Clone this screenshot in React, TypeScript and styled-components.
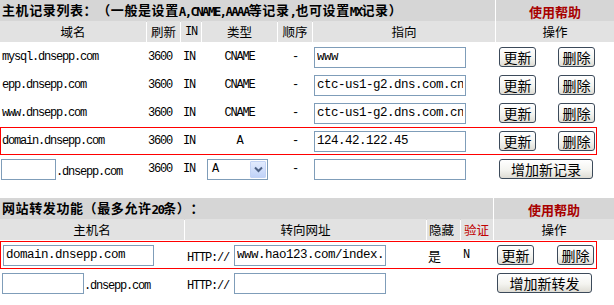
import React from "react";
import styled, { createGlobalStyle } from "styled-components";

const Global = createGlobalStyle`
  html, body { margin: 0; padding: 0; background: #fff; overflow: hidden; }
  body {
    font-family: "Noto Sans CJK SC", "Liberation Sans", sans-serif;
    color: #000;
    text-spacing-trim: space-all;
  }
  * { box-sizing: border-box; }
`;

const CJK = `"Noto Sans CJK SC", "Liberation Sans", sans-serif`;
const MONO = `"Liberation Mono", "Noto Sans CJK SC", monospace`;
const BOLDMONO = `"DejaVu Sans Mono", "Liberation Mono", monospace`;

const Page = styled.div`
  width: 614px;
  display: flex;
  flex-direction: column;
  gap: 15px;
`;

const Section = styled.section`
  display: flex;
  flex-direction: column;
`;

const Head = styled.div`
  display: flex;
  flex-direction: column;
  gap: 1px;
  margin-bottom: 1px;
`;

const TitleBar = styled.div<{ $help: number }>`
  display: grid;
  grid-template-columns: 1fr ${(p) => p.$help}px;
  column-gap: 1px;
  height: 20px;
`;

const TitleCell = styled.div`
  background: #d6d6d6;
  padding-left: 2px;
  font: bold 13px/20px ${CJK};
  letter-spacing: 0.6px;
  white-space: nowrap;
  text-spacing-trim: space-all;
`;

const Latin = styled.span`
  font-family: ${BOLDMONO};
  font-weight: bold;
  font-size: 12.5px;
  letter-spacing: -1.7px;
  vertical-align: -1px;
`;

const HelpCell = styled.div`
  background: #d6d6d6;
  display: flex;
  align-items: center;
  justify-content: center;
  font: bold 13px ${CJK};
  color: #a80000;
`;

const Grid = styled.div<{ $cols: string }>`
  display: grid;
  grid-template-columns: ${(p) => p.$cols};
  column-gap: 1px;
`;

const HeaderRow = styled(Grid)`
  height: 21px;
`;

const HeadCell = styled.div<{ $left?: number; $red?: boolean }>`
  background: #e2e2e2;
  display: flex;
  align-items: center;
  justify-content: ${(p) => (p.$left !== undefined ? "flex-start" : "center")};
  padding-left: ${(p) => p.$left ?? 0}px;
  font: 12.5px ${CJK};
  color: ${(p) => (p.$red ? "#c00000" : "#000")};
  white-space: nowrap;
`;

const MonoHead = styled.span`
  font: 12px ${MONO};
  letter-spacing: -1.2px;
`;

const DataRow = styled(Grid)`
  position: relative;
  height: 28px;
`;

const Mark = styled.div`
  position: absolute;
  left: 0;
  top: 0;
  width: 597px;
  height: 100%;
  border: 1px solid #ff0000;
  pointer-events: none;
`;

const Cell = styled.div<{ $center?: boolean; $pad?: number; $gap?: number }>`
  display: flex;
  align-items: center;
  justify-content: ${(p) => (p.$center ? "center" : "flex-start")};
  padding-left: ${(p) => p.$pad ?? 2}px;
  gap: ${(p) => p.$gap ?? 0}px;
  font: 12px ${MONO};
  letter-spacing: -1.2px;
  white-space: nowrap;
`;

const CjkText = styled.span`
  font: 13px ${CJK};
  letter-spacing: 0;
`;

const Low = styled.span`
  padding-top: 6px;
`;

const TextInput = styled.input<{ $w: number }>`
  width: ${(p) => p.$w}px;
  height: 21px;
  border: 1px solid #7f9db9;
  background: #fff;
  padding: 0 2px;
  margin: 0;
  font: 12.5px ${MONO};
  letter-spacing: -0.5px;
  color: #000;
  outline: none;
`;

const Button = styled.button<{ $w: number }>`
  width: ${(p) => p.$w}px;
  height: 20px;
  padding: 0;
  margin: 0;
  border: 1px solid #3c4a5a;
  border-radius: 3px;
  background: linear-gradient(#ffffff 0%, #f4f4f0 55%, #dedcd4 100%);
  font: 14px ${CJK};
  line-height: 18px;
  color: #000;
  letter-spacing: 0;
`;

const Combo = styled.div`
  width: 61px;
  height: 21px;
  margin-left: 5px;
  border: 1px solid #7f9db9;
  background: #fff;
  display: flex;
  align-items: center;
  justify-content: space-between;
  padding: 1px 1px 1px 4px;
  font: 12px ${MONO};
`;

const ComboArrow = styled.div`
  width: 16px;
  height: 17px;
  border: 1px solid #c3d3f5;
  border-radius: 1px;
  background: linear-gradient(#e2ebfe, #c0d2f8);
  display: flex;
  align-items: center;
  justify-content: center;
`;

const COLS1 = "146px 33px 20px 75px 34px 182px 118px";
const COLS2 = "184px 241px 33px 32px 120px";

type Rec = { host: string; type: string; target: string; marked?: boolean };

const records: Rec[] = [
  { host: "mysql.dnsepp.com", type: "CNAME", target: "www" },
  { host: "epp.dnsepp.com", type: "CNAME", target: "ctc-us1-g2.dns.com.cn" },
  { host: "www.dnsepp.com", type: "CNAME", target: "ctc-us1-g2.dns.com.cn" },
  { host: "domain.dnsepp.com", type: "A", target: "124.42.122.45", marked: true },
];

const Actions: React.FC<{ gap: number }> = ({ gap }) => (
  <Cell $pad={3} $gap={gap}>
    <Button $w={37}>更新</Button>
    <Button $w={37}>删除</Button>
  </Cell>
);

export default function App() {
  return (
    <Page>
      <Global />
      <Section>
        <Head>
          <TitleBar $help={118}>
            <TitleCell>
              主机记录列表：（一般是设置<Latin>A,CNAME,AAAA</Latin>等记录<Latin>,</Latin>也可设置<Latin>MX</Latin>记录）
            </TitleCell>
            <HelpCell>使用帮助</HelpCell>
          </TitleBar>
          <HeaderRow $cols={COLS1}>
            <HeadCell>域名</HeadCell>
            <HeadCell>刷新</HeadCell>
            <HeadCell>
              <MonoHead>IN</MonoHead>
            </HeadCell>
            <HeadCell>类型</HeadCell>
            <HeadCell>顺序</HeadCell>
            <HeadCell>指向</HeadCell>
            <HeadCell>操作</HeadCell>
          </HeaderRow>
        </Head>
        {records.map((r) => (
          <DataRow $cols={COLS1} key={r.host}>
            <Cell>{r.host}</Cell>
            <Cell $pad={1}>3600</Cell>
            <Cell>IN</Cell>
            <Cell $center $pad={0}>{r.type}</Cell>
            <Cell $center $pad={0}>-</Cell>
            <Cell $pad={1}>
              <TextInput $w={152} defaultValue={r.target} />
            </Cell>
            <Actions gap={22} />
            {r.marked && <Mark />}
          </DataRow>
        ))}
        <DataRow $cols={COLS1}>
          <Cell $pad={1}>
            <TextInput $w={55} />
            <Low>.dnsepp.com</Low>
          </Cell>
          <Cell $pad={1}>3600</Cell>
          <Cell>IN</Cell>
          <Cell $pad={0}>
            <Combo>
              <span>A</span>
              <ComboArrow>
                <svg width="9" height="7" viewBox="0 0 9 7">
                  <polyline points="1,1.5 4.5,5 8,1.5" fill="none" stroke="#4d6185" strokeWidth="2" />
                </svg>
              </ComboArrow>
            </Combo>
          </Cell>
          <Cell $center $pad={0}>-</Cell>
          <Cell $pad={1}>
            <TextInput $w={152} />
          </Cell>
          <Cell $pad={3}>
            <Button $w={94}>增加新记录</Button>
          </Cell>
        </DataRow>
      </Section>

      <Section>
        <Head>
          <TitleBar $help={120}>
            <TitleCell>
              网站转发功能（最多允许<Latin>20</Latin>条）：
            </TitleCell>
            <HelpCell>使用帮助</HelpCell>
          </TitleBar>
          <HeaderRow $cols={COLS2}>
            <HeadCell>主机名</HeadCell>
            <HeadCell>转向网址</HeadCell>
            <HeadCell $left={2}>隐藏</HeadCell>
            <HeadCell $left={3} $red>
              验证
            </HeadCell>
            <HeadCell>操作</HeadCell>
          </HeaderRow>
        </Head>
        <DataRow $cols={COLS2}>
          <Cell $pad={3}>
            <TextInput $w={151} defaultValue="domain.dnsepp.com" />
          </Cell>
          <Cell $pad={2} $gap={5}>
            <Low>HTTP://</Low>
            <TextInput $w={152} defaultValue="www.hao123.com/index.html" />
          </Cell>
          <Cell $pad={1}>
            <CjkText>是</CjkText>
          </Cell>
          <Cell $pad={2}>N</Cell>
          <Actions gap={23} />
          <Mark />
        </DataRow>
        <DataRow $cols={COLS2}>
          <Cell $pad={2}>
            <TextInput $w={82} />
            <Low>.dnsepp.com</Low>
          </Cell>
          <Cell $pad={2} $gap={5}>
            <Low>HTTP://</Low>
            <TextInput $w={152} />
          </Cell>
          <Cell />
          <Cell />
          <Cell $pad={3}>
            <Button $w={95}>增加新转发</Button>
          </Cell>
        </DataRow>
      </Section>
    </Page>
  );
}
